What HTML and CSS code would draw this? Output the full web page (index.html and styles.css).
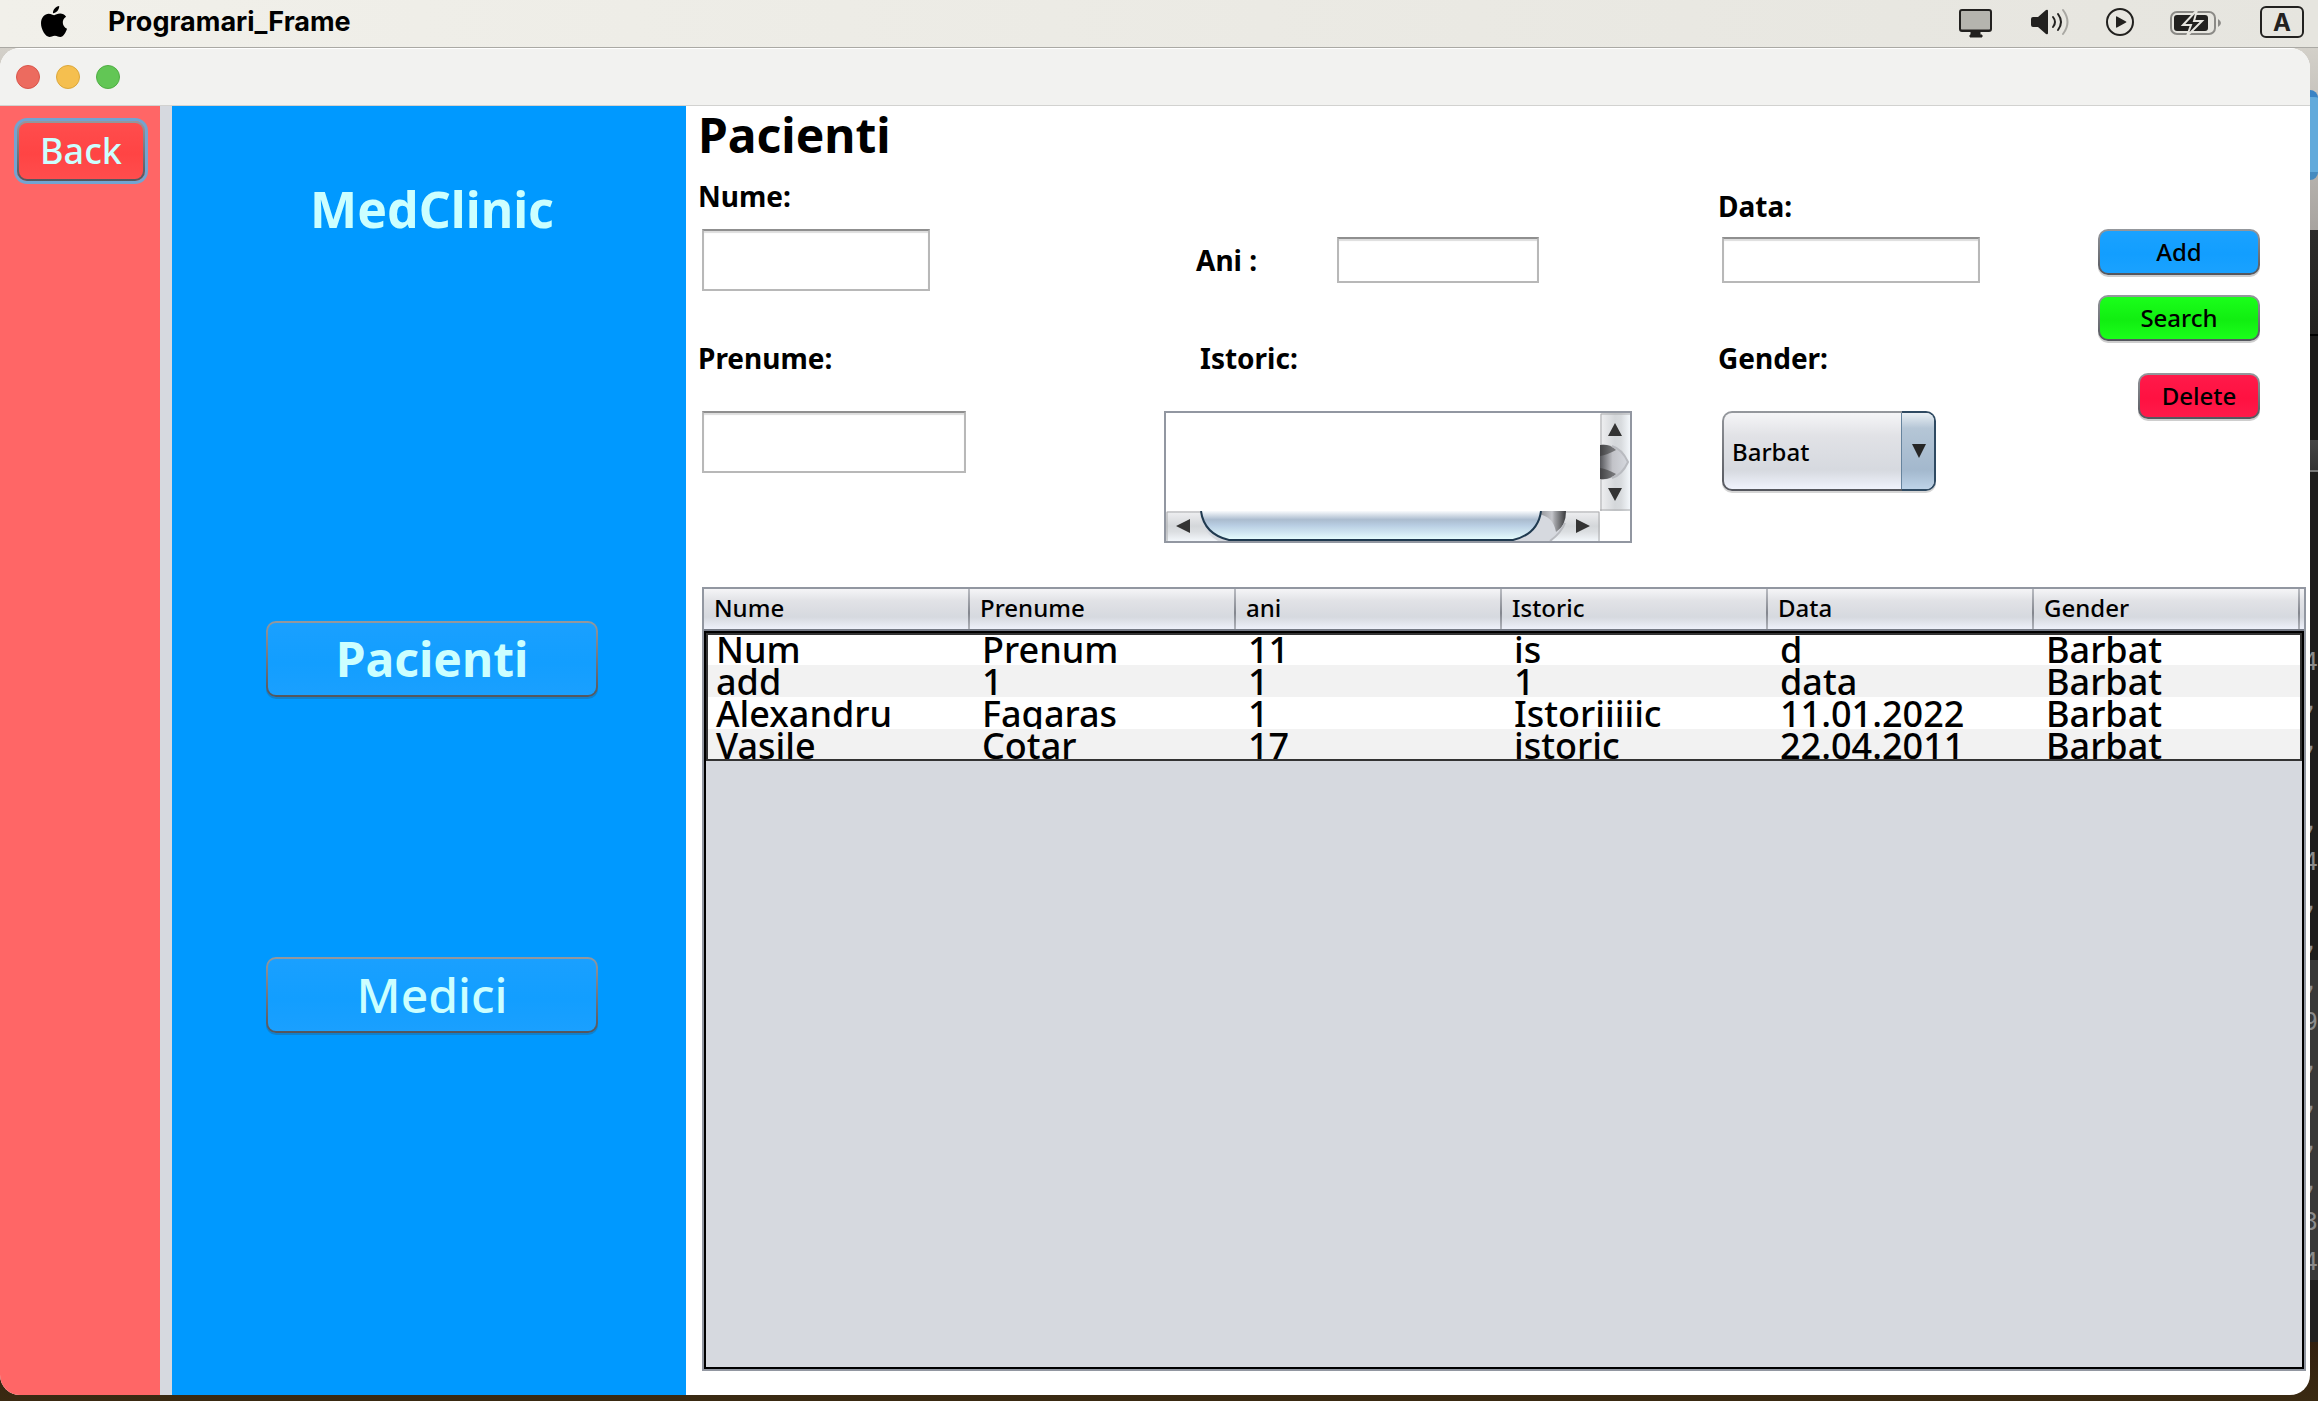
FILE: index.html
```html
<!DOCTYPE html>
<html lang="ro">
<head>
<meta charset="utf-8">
<title>Programari_Frame</title>
<link rel="stylesheet" href="styles.css">
</head>
<body>
<header class="menubar">
  <svg class="apple" width="26" height="32" viewBox="0 0 26 32" aria-hidden="true"><path d="M18.2 0c.3 3.6-3 7.300-6.200 7.200C11.600 3.900 15 .4 18.200 0zM13.200 9.200c1.300 0 3.300-1.600 6-1.600 2.200 0 4.500 1.200 5.900 3.200-4.900 3-4.100 9.700.9 11.900-.9 2.900-3.600 8.300-6.700 8.300-2.100 0-2.800-1.300-5.400-1.300-2.600 0-3.500 1.300-5.400 1.300C4.500 31 0 23.600 0 17.300 0 11.200 3.900 7.700 7.700 7.700c2.400 0 4.200 1.500 5.500 1.500z"/></svg>
  <span class="app-name">Programari_Frame</span>
  <div class="status">
    <svg width="33" height="32" viewBox="0 0 33 32" aria-hidden="true"><rect x="1" y="4" width="31" height="21" rx="2" fill="#b5b4ae" stroke="#22211f" stroke-width="2"/><path d="M2 24h29M12 26h9v3h2v2H11v-2h1z" fill="#22211f" stroke="#22211f"/></svg>
    <svg class="gap-wide" width="39" height="32" viewBox="0 0 39 32" aria-hidden="true"><path d="M0 13q0-2 2-2h5l8-7q2-1 2 1v22q0 2-2 1l-8-7H2q-2 0-2-2z" fill="#22211f"/><path d="M22 11q4 5 0 10M27 8q6 8 0 16" fill="none" stroke="#22211f" stroke-width="2" stroke-linecap="round"/><path d="M32 4q9 12 0 24" fill="none" stroke="#a9a8a3" stroke-width="2" stroke-linecap="round"/></svg>
    <svg width="28" height="32" viewBox="0 0 28 32" aria-hidden="true"><circle cx="14" cy="16" r="13" fill="none" stroke="#22211f" stroke-width="2"/><path d="M10 11q0-1 1-.5l9 5q1 .5 0 1l-9 5q-1 .5-1-.5z" fill="#22211f"/></svg>
    <svg width="51" height="32" viewBox="0 0 51 32" aria-hidden="true"><rect x="1" y="6" width="44" height="22" rx="6" fill="none" stroke="#8b8a86" stroke-width="2"/><path d="M48 13q6 4 0 8z" fill="#8b8a86"/><rect x="4" y="9" width="34" height="16" rx="3" fill="#22211f"/><path d="M27 4 13 19h8l-4 11 15-15h-8z" fill="#22211f" stroke="#e7e6e0" stroke-width="2"/></svg>
    <span class="keyboard gap-wide">A</span>
  </div>
</header>
<div class="desktop">
  <div class="window">
    <div class="titlebar">
      <span class="light close"></span><span class="light minimize"></span><span class="light maximize"></span>
    </div>
    <div class="frame">
      <aside class="rail"><button type="button" class="btn back">Back</button></aside>
      <nav class="sidebar">
        <div class="brand">MedClinic</div>
        <button type="button" class="btn nav-btn current">Pacienti</button>
        <button type="button" class="btn nav-btn">Medici</button>
      </nav>
      <main class="content">
        <h1>Pacienti</h1>
        <form class="patient-form">
          <div class="field nume"><label for="nume">Nume:</label><input id="nume" type="text"></div>
          <div class="field ani"><label for="ani">Ani :</label><input id="ani" type="text"></div>
          <div class="field data"><label for="data">Data:</label><input id="data" type="text"></div>
          <div class="field lower prenume"><label for="prenume">Prenume:</label><input id="prenume" type="text"></div>
          <div class="field lower istoric"><label for="istoric">Istoric:</label>
            <div class="text-pane">
              <textarea id="istoric"></textarea>
              <svg width="30" height="98" viewBox="0 0 30 98" aria-hidden="true">
                <defs>
                  <linearGradient id="v"><stop offset="0" stop-color="#f0f0f2"/><stop offset=".5" stop-color="#d4d7da"/><stop offset=".7" stop-color="#d8dbde"/><stop offset="1" stop-color="#f3f7fb"/></linearGradient>
                  <linearGradient id="vt"><stop offset="0" stop-color="#55565a"/><stop offset=".45" stop-color="#c2c3c8"/><stop offset="1" stop-color="#d6d9df"/></linearGradient>
                </defs>
                <path fill="url(#v)" d="M0 0h30v98H0z"/><path d="M1 98V1h29M0 97h30" fill="none" stroke="#aaabad"/>
                <path d="M0 32q18-2 28 17Q18 68 0 66z" fill="url(#vt)"/>
                <path d="M0 32q10-1 16 5Q7 42 0 43zM0 66q10 1 16-5Q7 56 0 55z" fill="#333" opacity=".55"/>
                <path d="M12 33q10 3 16 16-6 13-16 16" fill="none" stroke="#b9bbc0" stroke-width="2"/>
                <path d="M15 10l7 13H8zM8 75h14l-7 13z" fill="#333"/>
              </svg>
              <svg class="hbar" width="434" height="30" viewBox="0 0 434 30" aria-hidden="true">
                <defs>
                  <linearGradient id="h" x2="0" y2="1"><stop offset="0" stop-color="#f0f0f2"/><stop offset=".5" stop-color="#d4d7da"/><stop offset=".7" stop-color="#dcdfe2"/><stop offset="1" stop-color="#f3f7fb"/></linearGradient>
                  <linearGradient id="thumb" x2="0" y2="1"><stop offset="0" stop-color="#f9fbfd"/><stop offset=".3" stop-color="#abbccf"/><stop offset=".5" stop-color="#b9cee3"/><stop offset="1" stop-color="#e8ffff"/></linearGradient>
                  <linearGradient id="ht"><stop offset="0" stop-color="#8b8c90"/><stop offset=".5" stop-color="#c5c6cb"/><stop offset=".6" stop-color="#a2a3a7"/><stop offset="1" stop-color="#38393b"/></linearGradient>
                </defs>
                <path fill="url(#h)" d="M0 0h434v30H0z"/><path d="M1 30V1h432v29" fill="none" stroke="#aaabad"/>
                <path d="M34 0h366q0 18-15 30H52Q34 20 34 0z" fill="#d6d9df"/>
                <path d="M372 0h28q0 15-10 21-3-16-18-18z" fill="url(#ht)"/>
                <path d="M399 12q-4 10-15 18" fill="none" stroke="#b9bbc0" stroke-width="2"/>
                <path d="M35 0q3 23 28 29h284q25-6 28-29" fill="url(#thumb)" stroke="#203a50" stroke-width="2"/>
                <path d="M10 15l14-7v14zM410 8l14 7-14 7z" fill="#333"/>
              </svg>
            </div>
          </div>
          <div class="field lower gender"><label for="gender">Gender:</label>
            <div class="combo"><select id="gender"><option>Barbat</option><option>Femeie</option></select>
              <svg width="14" height="14" viewBox="0 0 14 14" aria-hidden="true"><path d="M0 0h14L7 14z" fill="#262626"/></svg></div>
          </div>
          <div class="actions">
            <button type="button" class="btn add">Add</button>
            <button type="button" class="btn search">Search</button>
            <button type="button" class="btn delete">Delete</button>
          </div>
        </form>
        <div class="table-pane">
          <table>
            <thead><tr><th scope="col">Nume</th><th scope="col">Prenume</th><th scope="col">ani</th><th scope="col">Istoric</th><th scope="col">Data</th><th scope="col">Gender</th></tr></thead>
            <tbody>
              <tr><td><span>Num</span></td><td><span>Prenum</span></td><td><span>11</span></td><td><span>is</span></td><td><span>d</span></td><td><span>Barbat</span></td></tr>
              <tr><td><span>add</span></td><td><span>1</span></td><td><span>1</span></td><td><span>1</span></td><td><span>data</span></td><td><span>Barbat</span></td></tr>
              <tr><td><span>Alexandru</span></td><td><span>Fagaras</span></td><td><span>1</span></td><td><span>Istoriiiiic</span></td><td><span>11.01.2022</span></td><td><span>Barbat</span></td></tr>
              <tr><td><span>Vasile</span></td><td><span>Cotar</span></td><td><span>17</span></td><td><span>istoric</span></td><td><span>22.04.2011</span></td><td><span>Barbat</span></td></tr>
            </tbody>
          </table>
        </div>
      </main>
    </div>
  </div>
  <div class="behind" aria-hidden="true">
    <div class="folder"></div>
    <div class="editor">
      <div>4</div><div>,</div><div>,</div><div></div><div>,</div><div>4</div><div>,</div><div>,</div><div>,</div><div>9</div><div>,</div><div>,</div><div>,</div><div>,</div><div>3</div><div>4</div>
    </div>
  </div>
</div>
</body>
</html>
```

FILE: styles.css
```css
* { box-sizing: border-box; }

body {
  margin: 0;
  min-height: 100vh;
  display: flex;
  flex-direction: column;
  font-family: "Noto Sans", "Open Sans", sans-serif;
  font-weight: 500;
  color: #000;
}

button, input, select, textarea { font: inherit; color: inherit; margin: 0; }

/* menu bar */
.menubar {
  height: 48px;
  display: flex;
  align-items: center;
  padding: 0 14px 4px 41px;
  background: linear-gradient(90deg, #f1f0ea, #e6e5df);
  border-bottom: 1px solid #aaa9a4;
}
.app-name { margin-left: 41px; font: 700 27px/32px Inter, sans-serif; }
.status { margin-left: auto; display: flex; align-items: center; gap: 36px; }
.status svg { display: block; }
.gap-wide { margin-left: 3px; }
.keyboard {
  width: 44px;
  height: 32px;
  border: 2px solid #22211f;
  border-radius: 6px;
  color: #22211f;
  font: 700 24px/29px Inter, sans-serif;
  text-align: center;
}

/* desktop */
.desktop {
  flex: 1;
  display: flex;
  padding-bottom: 6px;
  background: linear-gradient(#d3d0c9 0, #a8a4a0 182px, #222120 182px, #222120 1294px, #33200f 1294px, #3a2a12 100%);
}
.window {
  flex: 1;
  min-width: 0;
  display: flex;
  flex-direction: column;
  background: #fff;
  border-radius: 20px;
  overflow: hidden;
}
.titlebar {
  height: 58px;
  display: flex;
  align-items: center;
  gap: 16px;
  padding-left: 16px;
  background: #f2f2f0;
  border-top: 1px solid #fff;
  border-bottom: 1px solid #d2d2d0;
}
.light { width: 24px; height: 24px; border-radius: 50%; border: 1px solid; }
.close { background: #ec6b5f; border-color: #d8564b; }
.minimize { background: #f5bf4f; border-color: #dba73b; }
.maximize { background: #62c655; border-color: #50ad44; }

.behind { width: 8px; overflow: hidden; padding-top: 42px; }
.folder { height: 90px; background: #62aadb; border-top: 7px solid #3983c4; border-bottom: 8px solid #468bc0; border-radius: 0 8px 8px 0; }
.editor {
  margin-top: 50px;
  padding-top: 412px;
  background: linear-gradient(#2c2b2a 0, #222120 104px, #000 104px, #000 106px, #1c1b1a 106px, #1c1b1a 210px, #444 210px, #333 240px, #777 240px, #777 242px, #1e1d1c 242px, #1e1d1c 730px, #383838 730px, #383838 1050px, #222120 1050px);
  color: #8a8a8a;
  font: 24px/40px "DejaVu Sans Mono", monospace;
}
.editor div { height: 40px; direction: rtl; }

/* application frame */
.frame { flex: 1; display: flex; }
.rail { width: 172px; padding: 15px 0 0 17px; background: #f66; border-right: 12px solid #d6d9df; }
.sidebar {
  width: 514px;
  padding: 72px 0 0 6px;
  background: #09f;
  color: #cff;
  display: flex;
  flex-direction: column;
  align-items: center;
}
.brand { font-size: 50px; line-height: 62px; font-weight: 700; }

.btn {
  display: block;
  padding: 0;
  height: 46px;
  border: 2px solid transparent;
  border-radius: 10px;
  box-shadow: 0 2px 0 rgba(60, 60, 60, .25);
  font-size: 24px;
  line-height: 36px;
  text-align: center;
  background: linear-gradient(var(--hi), var(--lo) 55%, var(--hi)) padding-box, linear-gradient(#95989d, #54565d) border-box;
}
.back {
  --hi: #ff4d4d;
  --lo: #ff4444;
  width: 128px;
  height: 60px;
  color: #cff;
  font-size: 36px;
  line-height: 50px;
  box-shadow: 0 0 0 3px #73a4d1;
}
.nav-btn { --hi: #1aa0ff; --lo: #129eff; width: 332px; height: 76px; font-size: 48px; line-height: 60px; color: #cff; margin-top: 260px; }
.current { font-weight: 700; margin-top: 381px; }

/* content */
.content { flex: 1; min-width: 0; display: flex; flex-direction: column; padding: 0 4px 24px 12px; }
h1 { margin: 0; font-size: 48px; line-height: 58px; }
.patient-form {
  display: grid;
  grid-template-columns: minmax(0, 466fr) minmax(0, 554fr) minmax(0, 380fr) minmax(0, 208fr);
  grid-template-rows: 162px auto;
  padding-top: 14px;
}
.field { display: flex; flex-direction: column; align-items: flex-start; gap: 15px; }
.field label { font-size: 28px; line-height: 36px; font-weight: 700; }
.lower { gap: 35px; grid-row: 2; }
input {
  margin-left: 4px;
  width: 258px;
  height: 46px;
  padding: 0 10px;
  border: 2px solid #b8b8b8;
  border-top-color: #8f8f8f;
  box-shadow: inset 0 2px 1px #ddd;
  background: #fff;
  font-size: 24px;
}
.nume input { width: 228px; height: 62px; }
.prenume input { width: 264px; height: 62px; }
.ani { flex-direction: row; align-items: center; align-self: start; padding: 59px 0 0 32px; gap: 76px; }
.ani input { width: 202px; }
.data { padding-top: 10px; gap: 13px; }
.istoric label { margin-left: 36px; }
.text-pane { display: grid; grid-template-columns: 434px 30px; border: 2px solid #9297a1; }
.text-pane svg { display: block; }
textarea { display: block; width: 434px; height: 98px; border: 0; padding: 4px; resize: none; overflow: hidden; background: #fff; font-size: 24px; }
.combo { position: relative; margin-left: 4px; }
.combo svg { position: absolute; right: 10px; top: 33px; pointer-events: none; }
select {
  appearance: none;
  display: block;
  width: 214px;
  height: 80px;
  padding: 0 40px 0 8px;
  border: 2px solid transparent;
  border-radius: 10px;
  box-shadow: 0 2px 0 #d5d5d5;
  font-size: 24px;
  background:
    linear-gradient(#66849e, #66849e) right 32px top / 1px 100% no-repeat padding-box,
    linear-gradient(#e9eff4, #b5c6d6 20%, #a3b8cd 75%, #bdd3e8) right top / 32px 100% no-repeat padding-box,
    linear-gradient(#f5f5f7, #e1e2e6 30%, #d6d9df 75%, #f0f3fd) padding-box,
    linear-gradient(90deg, transparent 180px, #2f4a62 180px) border-box,
    linear-gradient(#95989d, #54565d) border-box;
}
.actions { grid-column: 4; grid-row: 1 / 3; display: flex; flex-direction: column; align-items: flex-end; gap: 20px; padding: 51px 46px 0 0; }
.add, .search { width: 162px; }
.add { --hi: #1aa2ff; --lo: #129eff; }
.search { --hi: #1aff1a; --lo: #11ee11; }
.delete { --hi: #ff1a4a; --lo: #ff1141; width: 122px; margin-top: 12px; }

/* table */
.table-pane {
  --header: linear-gradient(#f5f5f7, #e1e2e6 30%, #d6d9df 70%, #edf0fa);
  flex: 1;
  position: relative;
  margin: 44px 0 0 4px;
  padding: 0 2px;
  border: 2px solid #9297a1;
  background: linear-gradient(#747985, #747985) 0 40px / 100% 2px no-repeat, var(--header) 0 0 / 100% 40px no-repeat, #d6d9df;
}
.table-pane::after { content: ""; position: absolute; inset: 42px 0 0; border: 2px solid #000; pointer-events: none; }
table { width: 100%; border-collapse: collapse; table-layout: fixed; }
th {
  height: 44px;
  padding: 0 0 6px 8px;
  font-size: 24px;
  line-height: 36px;
  font-weight: 500;
  text-align: left;
  background: linear-gradient(#b9bbc1, #83868e 60%, #b0b3bb) right 2px top / 2px 40px no-repeat;
}
td { padding: 0; }
td span { display: block; height: 32px; padding-left: 10px; overflow: hidden; white-space: nowrap; font-size: 36px; line-height: 34px; }
tbody { outline: 2px solid #333; outline-offset: -2px; }
tbody tr { background: #fff; }
tbody tr:nth-child(even) { background: #f2f2f2; }
```
